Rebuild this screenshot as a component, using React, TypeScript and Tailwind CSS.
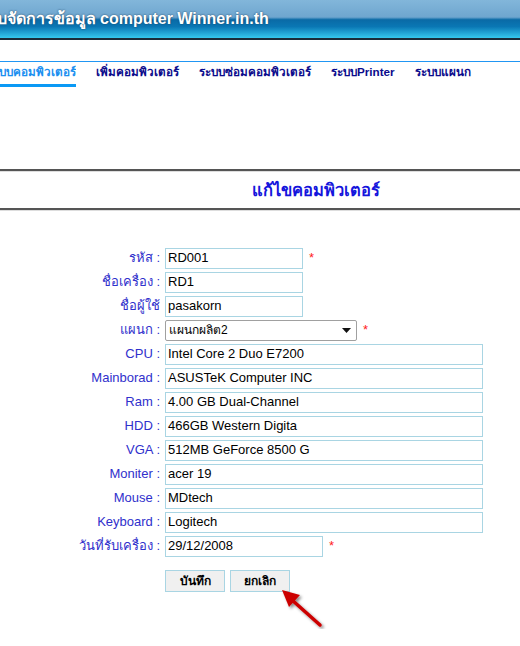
import React from "react";

const rows: { label: string; value: string; w: string; star?: boolean }[] = [
  { label: "CPU :", value: "Intel Core 2 Duo E7200", w: "w-[318px]" },
  { label: "Mainborad :", value: "ASUSTeK Computer INC", w: "w-[318px]" },
  { label: "Ram :", value: "4.00 GB Dual-Channel", w: "w-[318px]" },
  { label: "HDD :", value: "466GB Western Digita", w: "w-[318px]" },
  { label: "VGA :", value: "512MB GeForce 8500 G", w: "w-[318px]" },
  { label: "Moniter :", value: "acer 19", w: "w-[318px]" },
  { label: "Mouse :", value: "MDtech", w: "w-[318px]" },
  { label: "Keyboard :", value: "Logitech", w: "w-[318px]" },
];

function Star() {
  return <span className="ml-[6px] self-start mt-[5px] text-[#ff2020] text-[13px] leading-none">*</span>;
}

function Field({ label, value, w, star }: { label: string; value: string; w: string; star?: boolean }) {
  return (
    <div className="flex items-center h-[24px]">
      <div className="w-[165px] pr-[5px] text-right text-[13px] text-[#3030cc] whitespace-nowrap">{label}</div>
      <div className={`${w} h-[21px] border border-[#a9d5e3] flex items-center px-[2px] text-[13px] text-black`}>{value}</div>
      {star && <Star />}
    </div>
  );
}

export default function App() {
  return (
    <div className="w-[520px] h-[646px] overflow-hidden bg-white" style={{ fontFamily: "'Liberation Sans', Arial, sans-serif" }}>
      <div className="h-[38px] bg-[linear-gradient(to_bottom,#82b6da_0%,#6fa6cf_45%,#0a6aa6_52%,#0a77b4_70%,#36c8ee_100%)] flex items-center overflow-hidden text-white font-bold text-[16px] [text-shadow:0_0_2px_#1a4060] whitespace-nowrap">
        <div className="w-[100px] shrink-0 overflow-hidden flex justify-end pr-[4px]">
          <span className="shrink-0">ระบบจัดการข้อมูล</span>
        </div>
        <span>computer Winner.in.th</span>
      </div>
      <div className="h-[2px] bg-[#1b2b38]"></div>
      <div className="h-[21px]"></div>
      <div className="h-[1px] bg-[#2196f3]"></div>
      <div className="flex items-end gap-[20px] h-[25px] text-[11.7px] font-bold whitespace-nowrap">
        <div className="w-[76px] shrink-0 flex flex-col">
          <div className="overflow-hidden flex justify-end pb-[3px]">
            <span className="shrink-0 text-[#1b8ff0]">ระบบคอมพิวเตอร์</span>
          </div>
          <div className="h-[3px] bg-[#0a99f5]"></div>
        </div>
        <span className="text-[#0b0b8c] pb-[6px]">เพิ่มคอมพิวเตอร์</span>
        <span className="text-[#0b0b8c] pb-[6px]">ระบบซ่อมคอมพิวเตอร์</span>
        <span className="text-[#0b0b8c] pb-[6px]">ระบบPrinter</span>
        <span className="text-[#0b0b8c] pb-[6px]">ระบบแผนก</span>
      </div>
      <div className="h-[82px]"></div>
      <div className="border-t-2 border-[#555] border-b border-b-[#ddd]"></div>
      <div className="h-[36px] flex items-center pl-[252px] text-[16.5px] font-bold text-[#1414dc]">แก้ไขคอมพิวเตอร์</div>
      <div className="border-t-2 border-[#555] border-b border-b-[#ddd]"></div>
      <div className="h-[35px]"></div>
      <div className="flex flex-col">
        <Field label="รหัส :" value="RD001" w="w-[138px]" star />
        <Field label="ชื่อเครื่อง :" value="RD1" w="w-[138px]" />
        <Field label="ชื่อผู้ใช้" value="pasakorn" w="w-[138px]" />
        <div className="flex items-center h-[24px]">
          <div className="w-[165px] pr-[5px] text-right text-[13px] text-[#3030cc]">แผนก :</div>
          <div className="w-[192px] h-[21px] border border-[#a0a0a0] rounded-[2px] flex items-center justify-between pl-[3px] pr-[5px] text-[12px] text-black">
            <span>แผนกผลิต2</span>
            <svg width="9" height="5" viewBox="0 0 9 5"><path d="M0 0 L9 0 L4.5 5 Z" fill="#111" /></svg>
          </div>
          <Star />
        </div>
        {rows.map((r) => (
          <Field key={r.label} {...r} />
        ))}
        <Field label="วันที่รับเครื่อง :" value="29/12/2008" w="w-[158px]" star />
      </div>
      <div className="flex gap-[5px] pl-[165px] mt-[12px]">
        <div className="w-[60px] h-[22px] border border-[#a9d5e3] bg-[#f0f0f0] flex items-center justify-center text-[12px] font-bold">บันทึก</div>
        <div className="w-[60px] h-[22px] border border-[#a9d5e3] bg-[#f0f0f0] flex items-center justify-center text-[12px] font-bold">ยกเลิก</div>
      </div>
      <div className="pl-[278px] mt-[-7px]">
        <svg width="52" height="44" viewBox="0 0 52 44">
          <defs>
            <filter id="sh" x="-50%" y="-50%" width="200%" height="200%">
              <feDropShadow dx="2" dy="2" stdDeviation="1.5" floodColor="#000" floodOpacity="0.45" />
            </filter>
          </defs>
          <g filter="url(#sh)">
            <line x1="42" y1="40" x2="14" y2="15" stroke="#cc0000" strokeWidth="3.5" strokeLinecap="round" />
            <path d="M4 5 L22 10 L11 22 Z" fill="#cc0000" />
          </g>
        </svg>
      </div>
    </div>
  );
}
